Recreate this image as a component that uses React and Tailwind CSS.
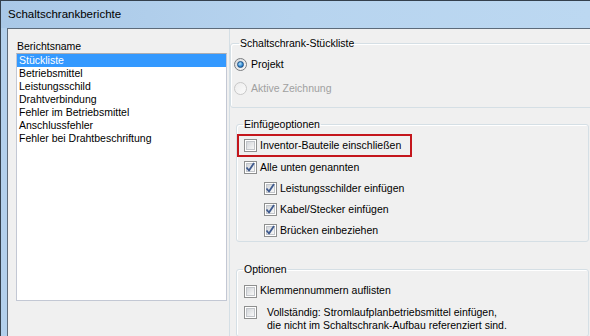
import React from 'react';

const reports = [
  'Stückliste',
  'Betriebsmittel',
  'Leistungsschild',
  'Drahtverbindung',
  'Fehler im Betriebsmittel',
  'Anschlussfehler',
  'Fehler bei Drahtbeschriftung',
];

function Checkbox({ checked }) {
  return (
    <div className="w-[13px] h-[13px] shrink-0 border border-[#8e8f8f] bg-white p-[1px]">
      <div className="w-full h-full border border-[#c2c5ca] bg-gradient-to-br from-[#d3d6da] to-[#f8f8f8] flex items-center justify-center">
        {checked && (
          <svg width="11" height="11" viewBox="0 0 11 11" className="overflow-visible">
            <path d="M1.5 5.5 L4 8.5 L9 1" fill="none" stroke="#3f5a8e" strokeWidth="1.8" strokeLinejoin="round" />
          </svg>
        )}
      </div>
    </div>
  );
}

function Radio({ checked, disabled }) {
  return (
    <div
      className={
        disabled
          ? 'w-[13px] h-[13px] shrink-0 rounded-full border border-[#c8c8c8] bg-gradient-to-br from-[#ececec] to-[#fbfbfb]'
          : 'w-[13px] h-[13px] shrink-0 rounded-full border border-[#7a7d80] bg-gradient-to-br from-[#d6d8db] to-[#fbfbfb] flex items-center justify-center'
      }
    >
      {checked && (
        <div className="w-[7px] h-[7px] rounded-full border border-[#1c4f86] bg-[radial-gradient(circle_at_40%_35%,#b9e6fb,#2f86cf_60%,#164f8f)]" />
      )}
    </div>
  );
}

export default function App() {
  return (
    <div className="w-[590px] h-[336px] overflow-hidden flex flex-col bg-[#b3d0ec] border-l border-t border-[#34404d] font-['Liberation_Sans',Arial,sans-serif] text-black">
      {/* Title bar */}
      <div className="h-[27px] shrink-0 flex items-center pl-[7px] bg-gradient-to-r from-[#a9c8e7] via-[#b7d4ef] to-[#bcd8f1] text-[11.5px]">
        Schaltschrankberichte
      </div>

      {/* Body */}
      <div className="flex-1 ml-[6px] flex bg-[#f0f0f0] border-l border-t border-[#5d6b7a] overflow-hidden text-[10.5px]">
        {/* Report list */}
        <div className="w-[221px] shrink-0 pl-[8px] pt-[10px]">
          <div className="h-[14px] leading-[14px] pl-[1px]">Berichtsname</div>
          <div className="w-[211px] h-[248px] bg-white border border-[#c3c8d4] border-t-[#abadb3]">
            {reports.map((name, i) => (
              <div
                key={name}
                className={
                  i === 0
                    ? 'h-[13px] leading-[13px] pl-[2px] bg-[#3399ff] text-white'
                    : 'h-[13px] leading-[13px] pl-[2px]'
                }
              >
                {name}
              </div>
            ))}
          </div>
        </div>

        {/* Options panel */}
        <div className="w-[450px] shrink-0 border-l border-[#d5dfe5]">
          <fieldset className="w-[420px] mt-[7px] border border-[#d5dfe5] rounded-[3px] shadow-[inset_1px_1px_0_#fff] pl-[3px] pb-[12px]">
            <legend className="ml-[5px] px-[1px] leading-[14px]">Schaltschrank-Stückliste</legend>
            <div className="mt-[8px] h-[13px] flex items-center gap-[4px] leading-[13px]">
              <Radio checked />
              <span>Projekt</span>
            </div>
            <div className="mt-[11px] h-[13px] flex items-center gap-[4px] leading-[13px] text-[#a0a0a0]">
              <Radio disabled />
              <span>Aktive Zeichnung</span>
            </div>
          </fieldset>

          <fieldset className="w-[353px] ml-[6px] mt-[9px] border border-[#d5dfe5] rounded-[3px] shadow-[inset_1px_1px_0_#fff]">
            <legend className="ml-[6px] px-[1px] leading-[14px]">Einfügeoptionen</legend>
            <div className="mt-[3px] w-[175px] h-[23px] border-2 border-[#c4161c] flex items-center gap-[3px] pl-[5px]">
              <Checkbox />
              <span>Inventor-Bauteile einschließen</span>
            </div>
            <div className="h-[21px] flex items-center gap-[3px] pl-[7px]">
              <Checkbox checked />
              <span>Alle unten genannten</span>
            </div>
            <div className="h-[21px] flex items-center gap-[3px] pl-[27px]">
              <Checkbox checked />
              <span>Leistungsschilder einfügen</span>
            </div>
            <div className="h-[21px] flex items-center gap-[3px] pl-[27px]">
              <Checkbox checked />
              <span>Kabel/Stecker einfügen</span>
            </div>
            <div className="h-[21px] flex items-center gap-[3px] pl-[27px]">
              <Checkbox checked />
              <span>Brücken einbeziehen</span>
            </div>
          </fieldset>

          <fieldset className="w-[353px] ml-[6px] mt-[20px] border border-[#d5dfe5] rounded-[3px] shadow-[inset_1px_1px_0_#fff] pb-[4px]">
            <legend className="ml-[6px] px-[1px] leading-[14px]">Optionen</legend>
            <div className="mt-[6px] h-[18px] flex items-center gap-[3px] pl-[7px]">
              <Checkbox />
              <span>Klemmennummern auflisten</span>
            </div>
            <div className="mt-[6px] flex items-start gap-[10px] pl-[7px]">
              <Checkbox />
              <div className="leading-[13px] -mt-[0.5px]">
                <div>Vollständig: Stromlaufplanbetriebsmittel einfügen,</div>
                <div>die nicht im Schaltschrank-Aufbau referenziert sind.</div>
              </div>
            </div>
          </fieldset>
        </div>
      </div>
    </div>
  );
}
